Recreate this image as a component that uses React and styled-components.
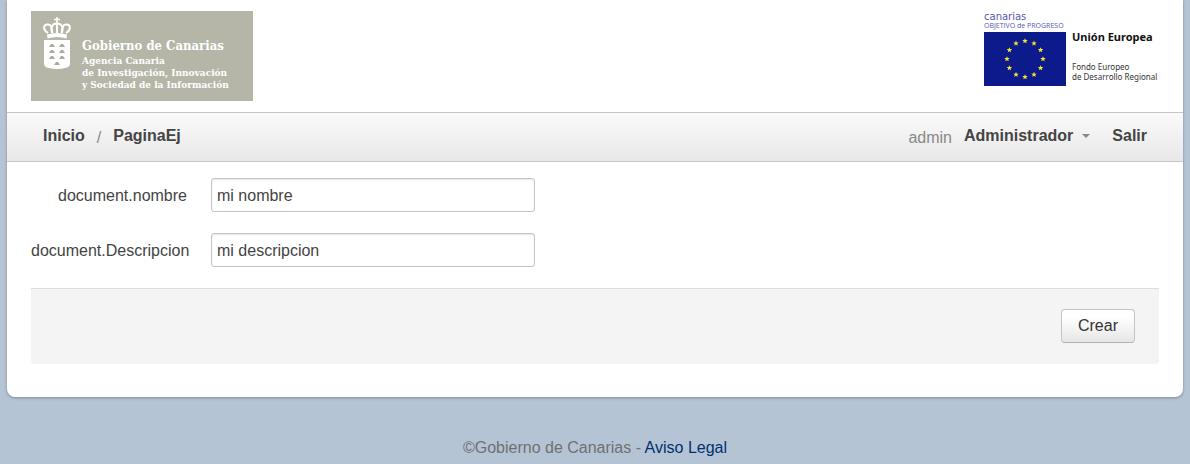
import React from "react";
import styled, { createGlobalStyle } from "styled-components";

const GlobalStyle = createGlobalStyle`
  *, *::before, *::after { box-sizing: border-box; }
  body {
    margin: 0;
    background: #b4c4d4;
    color: #444;
    font: 16px/24px "Liberation Sans", Arial, sans-serif;
  }
`;

const Page = styled.div`
  padding: 0 7px;
`;

const Card = styled.main`
  background: #fff;
  border-radius: 0 0 8px 8px;
  box-shadow: 0 1px 3px rgba(0, 0, 0, 0.3);
  padding-bottom: 33px;
`;

const Header = styled.header`
  display: flex;
  justify-content: space-between;
  align-items: flex-start;
  padding: 11px 24px;
`;

const GovLogo = styled.div`
  display: flex;
  gap: 11px;
  width: 222px;
  height: 90px;
  padding: 6px 0 0 12px;
  background: #b5b6a8;
  color: #fff;
  font-family: "DejaVu Serif Condensed", "DejaVu Serif", serif;
  font-weight: bold;
  white-space: nowrap;
`;

const GovText = styled.div`
  padding-top: 19px;
  font-size: 10px;
  line-height: 12px;
`;

const GovName = styled.div`
  font-size: 13px;
  line-height: 19px;
`;

const EuLogo = styled.div`
  display: flex;
  gap: 6px;
  width: 175px;
  font-family: "Noto Sans", "Open Sans", sans-serif;
  white-space: nowrap;
`;

const EuMark = styled.div`
  width: 82px;
  color: #5558b0;
  font-family: "DejaVu Sans", sans-serif;
`;

const EuBrand = styled.div`
  font-size: 10px;
  line-height: 12px;
`;

const EuMotto = styled.div`
  margin-bottom: 4px;
  font-family: "Open Sans", sans-serif;
  font-size: 7px;
  line-height: 5px;
`;

const Flag = styled.svg`
  display: block;
`;

const EuText = styled.div`
  padding-top: 17px;
  color: #333;
`;

const EuName = styled.div`
  margin-bottom: 16px;
  color: #111;
  font-size: 11px;
  font-weight: bold;
  line-height: 18px;
`;

const EuFund = styled.div`
  font-size: 8px;
  line-height: 10px;
`;

const NavBar = styled.nav`
  display: flex;
  justify-content: space-between;
  height: 50px;
  padding: 11px 36px;
  border: solid #c6c6c6;
  border-width: 1px 0;
  background: linear-gradient(#fafafa, #e8e8e8);
`;

const NavGroup = styled.div`
  display: flex;
  align-items: flex-start;
  gap: 12px;
`;

const NavLink = styled.a`
  color: #444;
  font-weight: bold;
  text-decoration: none;
`;

const NavNote = styled.span`
  padding-top: 2px;
  color: #888;
`;

const MenuButton = styled.button`
  display: flex;
  align-items: center;
  gap: 9px;
  margin-right: 10px;
  padding: 0;
  border: 0;
  background: none;
  color: #444;
  font: inherit;
  font-weight: bold;
`;

const Caret = styled.span`
  border: 4px solid transparent;
  border-top-color: #888;
  border-bottom: 0;
`;

const Form = styled.form`
  padding: 16px 24px 0;
`;

const Field = styled.div`
  display: flex;
  align-items: center;
  gap: 24px;
  margin-bottom: 21px;
`;

const Label = styled.label`
  width: 156px;
  padding-top: 2px;
  text-align: right;
  white-space: nowrap;
`;

const TextInput = styled.input`
  width: 324px;
  height: 34px;
  padding: 2px 5px 0;
  border: 1px solid #c4c4c4;
  border-radius: 3px;
  background: #fff;
  box-shadow: inset 0 1px 2px rgba(0, 0, 0, 0.1);
  color: #444;
  font: inherit;
`;

const Actions = styled.div`
  display: flex;
  justify-content: flex-end;
  padding: 20px 24px 21px;
  border-top: 1px solid #ddd;
  border-radius: 0 0 4px 4px;
  background: #f4f4f4;
`;

const Button = styled.button`
  height: 34px;
  padding: 0 16px;
  border: 1px solid #c4c4c4;
  border-bottom-color: #b2b2b2;
  border-radius: 4px;
  background: linear-gradient(#fff 20%, #e6e6e6);
  color: #333;
  font: inherit;
`;

const Footer = styled.footer`
  padding: 39px 0 4px;
  color: #707070;
  text-align: center;
`;

const FooterLink = styled.a`
  color: #003070;
  text-decoration: none;
`;

const mountains = [
  [9, 28], [19, 28], [9, 34], [19, 34], [9, 40], [19, 40], [14, 46],
];

function Crest() {
  return (
    <svg width="28" height="54" viewBox="0 0 28 54" aria-hidden="true">
      <path d="M14 0v6M11 2.500h6" stroke="#fff" strokeWidth="1.700" />
      <g fill="none" stroke="#fff" strokeWidth="1.900">
        <path d="M5 16C0 13 0 8 4 7.500C8 7 9 10 9 16" />
        <path d="M23 16C28 13 28 8 24 7.500C20 7 19 10 19 16" />
        <path d="M9.500 16C7 11 9 6.500 14 6.500C19 6.500 21 11 18.500 16M14 7V16" />
      </g>
      <path d="M4 17.500Q14 14.500 24 17.500L23.500 21.500Q14 18.500 4.500 21.500Z" fill="#fff" />
      <path d="M1 23H27V47Q27 50 22 51Q14 53 6 51Q1 50 1 47Z" fill="#fff" />
      {mountains.map(([x, y]) => (
        <path key={`${x}-${y}`} d={`M${x - 3} ${y + 2}L${x - 1} ${y - 1}h2L${x + 3} ${y + 2}Z`} fill="#aaab9b" />
      ))}
    </svg>
  );
}

function EuFlag() {
  const star = "M0-2.800L.8-.9 2.700-.9 1.200.4 1.700 2.300 0 1.200-1.700 2.300-1.200.4-2.700-.9-.8-.9Z";
  return (
    <Flag width="82" height="54" viewBox="0 0 82 54" aria-hidden="true">
      <rect width="82" height="54" fill="#0c1a8c" />
      {Array.from({ length: 12 }, (_, i) => {
        const a = (i * Math.PI) / 6;
        return (
          <path
            key={i}
            d={star}
            fill="#f4e32c"
            transform={`translate(${41 + 18 * Math.sin(a)} ${27 - 18 * Math.cos(a)})`}
          />
        );
      })}
    </Flag>
  );
}

export default function App() {
  return (
    <>
      <GlobalStyle />
      <Page>
        <Card>
          <Header>
            <GovLogo>
              <Crest />
              <GovText>
                <GovName>Gobierno de Canarias</GovName>
                <div>Agencia Canaria</div>
                <div>de Investigación, Innovación</div>
                <div>y Sociedad de la Información</div>
              </GovText>
            </GovLogo>
            <EuLogo>
              <EuMark>
                <EuBrand>canarias</EuBrand>
                <EuMotto>OBJETIVO de PROGRESO</EuMotto>
                <EuFlag />
              </EuMark>
              <EuText>
                <EuName>Unión Europea</EuName>
                <EuFund>Fondo Europeo</EuFund>
                <EuFund>de Desarrollo Regional</EuFund>
              </EuText>
            </EuLogo>
          </Header>
          <NavBar>
            <NavGroup>
              <NavLink href="#inicio">Inicio</NavLink>
              <NavNote>/</NavNote>
              <NavLink href="#pagina">PaginaEj</NavLink>
            </NavGroup>
            <NavGroup>
              <NavNote>admin</NavNote>
              <MenuButton type="button">
                Administrador
                <Caret />
              </MenuButton>
              <NavLink href="#salir">Salir</NavLink>
            </NavGroup>
          </NavBar>
          <Form onSubmit={(e) => e.preventDefault()}>
            <Field>
              <Label htmlFor="nombre">document.nombre</Label>
              <TextInput id="nombre" defaultValue="mi nombre" />
            </Field>
            <Field>
              <Label htmlFor="descripcion">document.Descripcion</Label>
              <TextInput id="descripcion" defaultValue="mi descripcion" />
            </Field>
            <Actions>
              <Button type="submit">Crear</Button>
            </Actions>
          </Form>
        </Card>
        <Footer>
          ©Gobierno de Canarias - <FooterLink href="#aviso">Aviso Legal</FooterLink>
        </Footer>
      </Page>
    </>
  );
}
